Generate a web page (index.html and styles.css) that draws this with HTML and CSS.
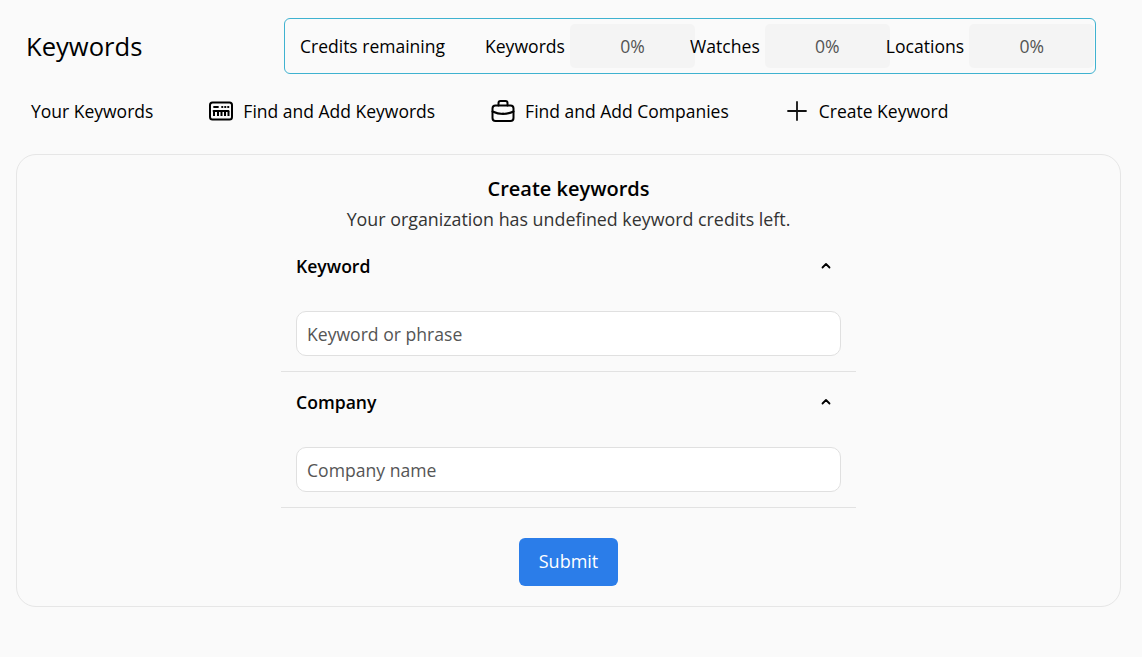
FILE: index.html
```html
<!DOCTYPE html>
<html lang="en">
<head>
<meta charset="utf-8">
<title>Keywords</title>
<link rel="stylesheet" href="styles.css">
</head>
<body>
<header class="top">
  <h1 class="title">Keywords</h1>
  <div class="credits">
    <span class="credits-label">Credits remaining</span>
    <div class="stat"><span>Keywords</span><span class="pct">0%</span></div>
    <div class="stat"><span>Watches</span><span class="pct">0%</span></div>
    <div class="stat stat-last"><span>Locations</span><span class="pct">0%</span></div>
  </div>
</header>
<nav class="tabs">
  <a class="tab">Your Keywords</a>
  <a class="tab">
    <svg class="ico" viewBox="0 0 24 24" fill="none" stroke="#000" stroke-width="2" stroke-linecap="round" stroke-linejoin="round"><rect x="1" y="3.500" width="22" height="17" rx="2.500"/><path d="M5 8h4M13 8h.5M16 8h.5M19 8h.5" stroke-width="1.800"/><path d="M4.500 12h15" stroke-width="1.800"/><path d="M5 12v5M9 12v5M12.500 12v5M16 12v5M19.500 12v5" stroke-width="2" stroke-linecap="butt"/></svg>
    Find and Add Keywords
  </a>
  <a class="tab">
    <svg class="ico" viewBox="0 0 24 24" fill="none" stroke="#000" stroke-width="2" stroke-linecap="round" stroke-linejoin="round"><rect x="1.500" y="6.500" width="21" height="15.500" rx="3"/><path d="M7.500 6.500V4a2 2 0 0 1 2-2h5a2 2 0 0 1 2 2v2.500M1.500 12.500c6.500 3 14.500 3 21 0M12 14.500v.5"/></svg>
    Find and Add Companies
  </a>
  <a class="tab">
    <svg class="ico" viewBox="0 0 24 24" fill="none" stroke="#111" stroke-linecap="round"><path d="M12 3v18M3 12h18" stroke-width="1.800"/></svg>
    Create Keyword
  </a>
</nav>
<main class="card">
  <h2 class="card-title">Create keywords</h2>
  <p class="card-sub">Your organization has undefined keyword credits left.</p>
  <form class="form">
    <section class="section">
      <div class="section-head"><span>Keyword</span>
        <svg class="chev" viewBox="0 0 12 12" fill="none" stroke="#000" stroke-width="1.800" stroke-linecap="round" stroke-linejoin="round"><path d="M2.500 7.500 6 4l3.500 3.500"/></svg>
      </div>
      <input class="field" type="text" placeholder="Keyword or phrase">
    </section>
    <section class="section">
      <div class="section-head"><span>Company</span>
        <svg class="chev" viewBox="0 0 12 12" fill="none" stroke="#000" stroke-width="1.800" stroke-linecap="round" stroke-linejoin="round"><path d="M2.500 7.500 6 4l3.500 3.500"/></svg>
      </div>
      <input class="field" type="text" placeholder="Company name">
    </section>
    <button class="submit" type="button">Submit</button>
  </form>
</main>
</body>
</html>
```
FILE: styles.css
```css
* { box-sizing: border-box; }
html, body { margin: 0; height: 100%; }
body {
  background: #fafafa;
  color: #000;
  font-family: "Open Sans", sans-serif;
  font-size: 17.6px;
  line-height: 24px;
  overflow: hidden;
}
.top {
  display: flex;
  align-items: center;
  padding: 18px 0 0 26px;
}
.title {
  margin: 0;
  width: 258px;
  font-size: 25.6px;
  line-height: 32px;
  font-weight: 400;
  position: relative;
  top: 1px;
}
.credits {
  width: 812px;
  height: 56px;
  display: flex;
  align-items: center;
  padding-left: 15px;
  border: 1px solid #3fb2d0;
  border-radius: 6px;
}
.credits-label { margin-right: 40px; white-space: nowrap; font-size: 17.5px; }
.stat {
  display: flex;
  align-items: center;
  gap: 5px;
  margin-right: -5px;
}
.stat-last { margin-left: 1px; }
.pct {
  width: 125px;
  height: 44px;
  display: flex;
  align-items: center;
  justify-content: center;
  background: #f4f4f4;
  border-radius: 5px;
  color: #555;
}
.tabs {
  display: flex;
  align-items: center;
  height: 32px;
  margin-top: 21px;
  padding-left: 31px;
  font-size: 17.5px;
}
.tab {
  display: flex;
  align-items: center;
  gap: 10px;
  margin-right: 56px;
}
.ico { width: 24px; height: 24px; flex: none; }
.card {
  width: 1105px;
  height: 453px;
  margin: 27px 0 0 16px;
  padding-top: 22px;
  border: 1px solid #e6e6e6;
  border-radius: 20px;
  display: flex;
  flex-direction: column;
  align-items: center;
}
.card-title {
  margin: 0;
  font-size: 20px;
  line-height: 24px;
  font-weight: 600;
}
.card-sub {
  margin: 6px 0 5px;
  color: #333;
  font-size: 17.84px;
  line-height: 24px;
}
.form {
  width: 575px;
  display: flex;
  flex-direction: column;
  align-items: center;
}
.section {
  width: 100%;
  height: 136px;
  padding: 18px 15px 0;
  border-bottom: 1px solid #e2e2e2;
}
.section-head {
  height: 24px;
  display: flex;
  align-items: center;
  justify-content: space-between;
  font-weight: 600;
  padding-right: 9px;
}
.chev { width: 12px; height: 12px; }
.field {
  display: block;
  width: 545px;
  height: 45px;
  margin-top: 33px;
  padding: 0 10px;
  background: #fff;
  border: 1px solid #e0e0e0;
  border-radius: 10px;
  font: inherit;
  color: #000;
  outline: none;
}
.field::placeholder { color: #555; opacity: 1; }
.submit {
  width: 99px;
  height: 48px;
  margin-top: 30px;
  padding-bottom: 3px;
  background: #2b7de9;
  color: #fff;
  border: 0;
  border-radius: 6px;
  font: inherit;
  font-size: 18px;
  font-weight: 500;
}
```
